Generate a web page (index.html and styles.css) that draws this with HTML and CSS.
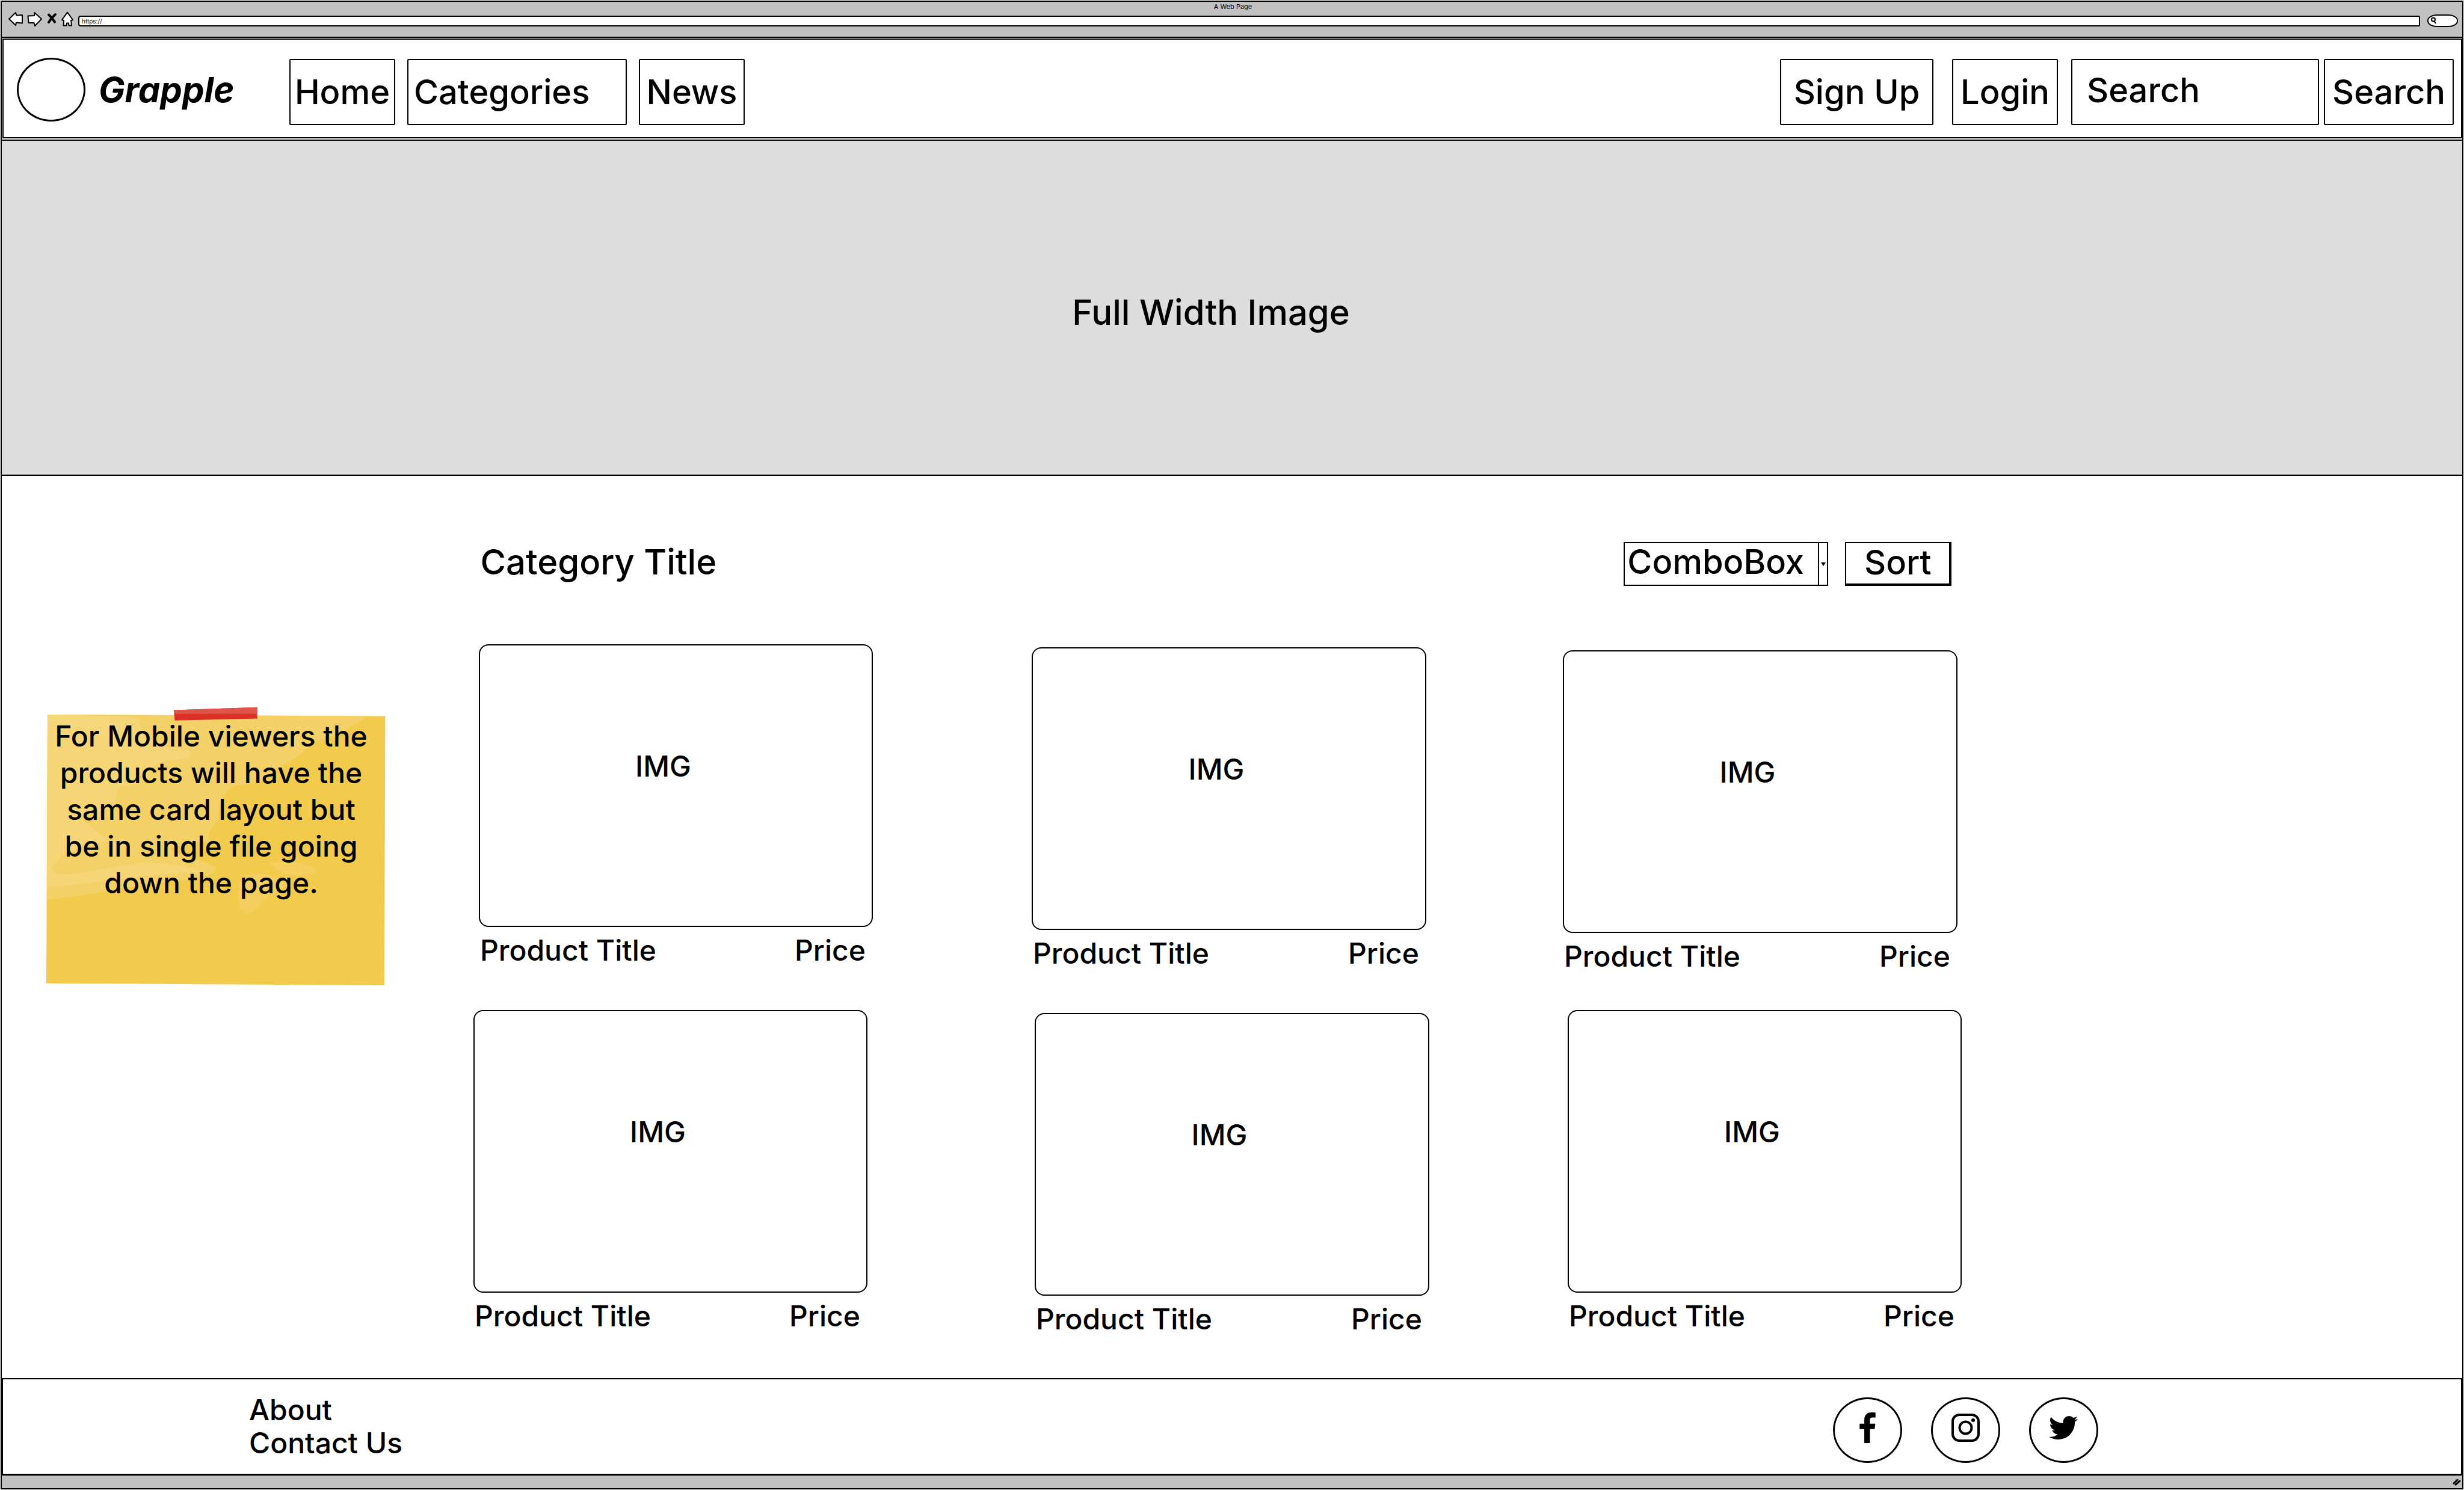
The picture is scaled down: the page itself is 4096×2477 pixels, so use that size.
FILE: index.html
```html
<!DOCTYPE html>
<html lang="en">
<head>
<meta charset="utf-8">
<title>A Web Page</title>
<meta name="viewport" content="width=device-width, initial-scale=1">
<link rel="stylesheet" href="styles.css">
</head>
<body>
<div class="window">
  <div class="chrome">
    <p class="chrome-title">A Web Page</p>
    <div class="chrome-row">
      <div class="chrome-icons">
        <button class="chrome-button" type="button" aria-label="Back">
          <svg width="26" height="26" viewBox="0 0 26 26"><path d="M2 12.500L13 2L14.500 6.500L24 6V19.500L14 18.500L13 23Z" fill="#fff" stroke="#000" stroke-width="2" stroke-linejoin="round"/></svg>
        </button>
        <button class="chrome-button" type="button" aria-label="Forward">
          <svg width="26" height="26" viewBox="0 0 26 26"><path d="M24 12.500L12.500 2L12 7L1.500 7.500L2.500 19L11.500 19L13 24Z" fill="#fff" stroke="#000" stroke-width="2" stroke-linejoin="round"/></svg>
        </button>
        <button class="chrome-button" type="button" aria-label="Stop">
          <svg width="18" height="26" viewBox="0 0 18 26"><path d="M4 5.500Q8 9 14 17.500M15 5Q8 11 4 18" fill="none" stroke="#000" stroke-width="4" stroke-linecap="round"/></svg>
        </button>
        <button class="chrome-button" type="button" aria-label="Home">
          <svg width="22" height="26" viewBox="0 0 22 26"><path d="M11 1.500L20 14L17 15L18 23.500H13.500L13 19.500H10L9.500 23.500H4.500L5 15L2 14Z" fill="#fff" stroke="#000" stroke-width="2" stroke-linejoin="round"/></svg>
        </button>
      </div>
      <input class="address" type="text" value="https://" aria-label="Address">
      <div class="chrome-search">
        <svg width="12" height="13" viewBox="0 0 12 13" aria-hidden="true"><circle cx="5" cy="4.500" r="3" fill="none" stroke="#000" stroke-width="2"/><path d="M6.500 7L9 11" stroke="#000" stroke-width="2"/></svg>
        <input class="chrome-query" type="text" aria-label="Web search">
      </div>
    </div>
  </div>

  <header class="site-header">
    <a class="brand" href="#"><span class="logo"></span><span class="brand-name">Grapple</span></a>
    <nav class="site-nav">
      <a class="box" href="#">Home</a>
      <a class="box box-wide" href="#">Categories</a>
      <a class="box" href="#">News</a>
    </nav>
    <div class="account">
      <button class="box box-signup" type="button">Sign Up</button>
      <button class="box" type="button">Login</button>
    </div>
    <form class="search">
      <input class="box search-field" type="text" value="Search" aria-label="Search">
      <button class="box search-button" type="button">Search</button>
    </form>
  </header>

  <section class="hero"><p>Full Width Image</p></section>

  <main class="catalog">
    <div class="toolbar">
      <h1 class="category">Category Title</h1>
      <div class="combo">
        <select class="combo-select" aria-label="Sort by"><option>ComboBox</option></select>
        <span class="combo-arrow"><svg width="8" height="6" viewBox="0 0 8 6" aria-hidden="true"><path d="M0 0H8L4 6Z"/></svg></span>
      </div>
      <button class="sort" type="button">Sort</button>
    </div>

    <div class="row row-first">
      <article class="card"><div class="picture">IMG</div><div class="caption"><span>Product Title</span><span>Price</span></div></article>
      <article class="card step"><div class="picture">IMG</div><div class="caption"><span>Product Title</span><span>Price</span></div></article>
      <article class="card step-double"><div class="picture">IMG</div><div class="caption"><span>Product Title</span><span>Price</span></div></article>
    </div>
    <div class="row row-second">
      <article class="card"><div class="picture">IMG</div><div class="caption"><span>Product Title</span><span>Price</span></div></article>
      <article class="card step"><div class="picture">IMG</div><div class="caption"><span>Product Title</span><span>Price</span></div></article>
      <article class="card"><div class="picture">IMG</div><div class="caption"><span>Product Title</span><span>Price</span></div></article>
    </div>

    <aside class="note">
      <svg class="note-paper" viewBox="0 0 1568 1568" preserveAspectRatio="none" aria-hidden="true">
        <path d="M70 111L1474 119L1470 1500L65 1490Z" fill="#f2ca4c"/>
        <path d="M70 111L1404 119Q1330 170 1275 222Q1200 232 1165 265C1120 320 1110 330 1000 405C960 450 960 465 850 474C800 510 785 560 780 625C765 700 735 690 742 740L745 765Q640 765 578 800Q600 825 680 850Q770 880 770 905Q760 940 640 960C400 985 260 1040 68 1062Z" fill="#f3d166"/>
        <path d="M70 111L270 118Q440 120 450 135C460 230 500 240 560 275C640 285 665 290 668 315Q665 340 580 345Q500 360 490 410Q470 470 400 475Q355 480 357 520Q360 560 340 590Q270 610 205 640L325 760Q210 790 140 820Q80 890 92 915Q110 935 170 928C300 910 380 880 490 870Q650 880 715 920C500 925 350 965 68 1000Z" fill="#f5d576"/>
        <path d="M315 119Q360 160 405 128Q405 150 375 190Q345 230 280 215Q180 165 70 168V111Z" fill="#f6d980" opacity=".5"/>
        <path d="M996 870Q1080 860 1130 875Q1190 900 1191 914Q1170 935 1090 936Q1010 915 996 870ZM1000 940Q930 915 885 940C855 980 855 1110 890 1130Q920 1135 940 1105C980 1050 1010 1020 1070 985Z" fill="#f4cf60"/>
        <path d="M595 88L942 73V131L599 141Z" fill="#dc2f26"/>
        <path d="M595 88L942 73V107H596Z" fill="#df5449"/>
      </svg>
      <p class="note-text">For Mobile viewers the products will have the same card layout but be in single file going down the page.</p>
    </aside>
  </main>

  <footer class="site-footer">
    <ul class="footer-links">
      <li><a href="#">About</a></li>
      <li><a href="#">Contact Us</a></li>
    </ul>
    <div class="social">
      <a href="#" aria-label="Facebook"><svg width="27" height="51" viewBox="479 0 864 1664"><path d="M1343 12v264h-157q-86 0-116 36t-30 108v189h293l-39 296h-254v759h-306v-759h-255v-296h255v-218q0-186 104-288.500t277-102.500q147 0 228 12z"/></svg></a>
      <a href="#" aria-label="Instagram"><svg width="47" height="47" viewBox="0 0 47 47"><rect x="2" y="2" width="43" height="43" rx="11" fill="none" stroke="#000" stroke-width="4"/><circle cx="23.500" cy="23.500" r="10" fill="none" stroke="#000" stroke-width="4"/><circle cx="36" cy="11" r="3"/></svg></a>
      <a href="#" aria-label="Twitter"><svg width="48" height="39" viewBox="108 256 1576 1280"><path d="M1684 408q-67 98-162 167 1 14 1 42 0 130-38 259.500t-115.500 248.500-184.500 210.500-258 146-323 54.500q-271 0-496-145 35 4 78 4 225 0 401-138-105-2-188-64.500t-114-159.500q33 5 61 5 43 0 85-11-112-23-185.500-111.500t-73.500-205.500v-4q68 38 146 41-66-44-105-115t-39-154q0-88 44-163 121 149 294.500 238.500t371.500 99.500q-8-38-8-74 0-134 94.500-228.500t228.500-94.500q140 0 236 102 109-21 205-78-37 115-142 178 93-10 186-50z"/></svg></a>
    </div>
  </footer>

  <div class="status-bar">
    <svg width="14" height="12" viewBox="0 0 14 12" aria-hidden="true"><path d="M2 8L8 2M5 10L12 4" stroke="#000" stroke-width="3" stroke-linecap="round"/></svg>
  </div>
</div>
</body>
</html>
```

FILE: styles.css
```css
*,
*::before,
*::after {
  box-sizing: border-box;
}

body,
p,
h1,
ul {
  margin: 0;
  padding: 0;
}

body {
  background: #fff;
  color: #000;
  font-family: Inter, "Liberation Sans", sans-serif;
  font-weight: 500;
}

a {
  color: inherit;
  text-decoration: none;
}

button,
input,
select {
  margin: 0;
  color: inherit;
  font: inherit;
}

svg {
  display: block;
}

.window {
  display: flex;
  flex-direction: column;
  min-height: calc(100vh - 2px);
  margin: 1px;
  border: 2px solid #000;
}

/* Browser bar */

.chrome {
  padding: 0 7px 16px 10px;
  border-bottom: 2px solid #000;
  background: #c1c1c1;
  font-weight: 400;
}

.chrome-title {
  font-size: 11px;
  line-height: 16px;
  text-align: center;
}

.chrome-row {
  display: flex;
  align-items: flex-end;
  height: 26px;
}

.chrome-icons {
  display: flex;
  gap: 6px;
  width: 117px;
}

.chrome-button {
  padding: 0;
  border: 0;
  background: none;
}

.address {
  flex: 1;
  height: 18px;
  margin-bottom: 1px;
  padding: 0 4px;
  border: 2px solid #000;
  border-radius: 4px 2px 2px 4px;
  background: #fff;
  font-size: 10px;
}

.chrome-search {
  display: flex;
  align-items: center;
  width: 51px;
  height: 21px;
  margin-left: 12px;
  padding: 0 3px;
  border: 2px solid #000;
  border-radius: 16px / 10px;
  background: #fff;
}

.chrome-query {
  flex: 1;
  min-width: 0;
  height: 14px;
  padding: 0;
  border: 0;
  background: none;
  font-size: 10px;
}

/* Header */

.site-header {
  display: flex;
  align-items: center;
  margin: 1px 0 2px 1px;
  padding: 30px 12px 18px 22px;
  border: 2px solid #000;
}

.brand {
  display: flex;
  align-items: center;
  gap: 22px;
  width: 453px;
  padding-bottom: 8px;
}

.logo {
  width: 114px;
  height: 106px;
  border: 3px solid #000;
  border-radius: 50%;
}

.brand-name {
  font-size: 58px;
  font-style: italic;
  font-weight: 700;
}

.site-nav {
  display: flex;
  gap: 20px;
}

.box {
  min-width: 176px;
  height: 110px;
  padding: 0;
  border: 2px solid #000;
  border-radius: 2px;
  background: #fff;
  font-size: 56px;
  line-height: 106px;
  text-align: center;
}

.box-wide {
  width: 365px;
  padding: 0 9px;
  text-align: left;
}

.account {
  display: flex;
  gap: 31px;
  margin-left: auto;
}

.box-signup {
  width: 255px;
}

.search {
  display: flex;
  gap: 8px;
  margin-left: 22px;
}

.search-field {
  width: 412px;
  padding: 0 24px 6px;
  text-align: left;
}

.search-button {
  width: 216px;
}

/* Banner */

.hero {
  display: flex;
  align-items: center;
  justify-content: center;
  height: 559px;
  padding: 14px 70px 0 0;
  border: solid #000;
  border-width: 2px 0;
  background: #ddd;
  font-size: 58px;
}

/* Catalog */

.catalog {
  position: relative;
  flex: 1;
  padding-top: 110px;
}

.toolbar {
  display: flex;
  align-items: stretch;
  height: 73px;
  margin-bottom: 97px;
  padding: 0 20.750% 0 19.450%;
}

.category {
  margin-right: auto;
  padding-bottom: 6px;
  font-size: 58px;
  font-weight: 500;
  line-height: 67px;
}

.combo {
  position: relative;
  width: 340px;
  margin-right: 28px;
}

.combo-select {
  width: 100%;
  height: 100%;
  padding: 0 0 6px 4px;
  border: 2px solid #000;
  border-radius: 0;
  appearance: none;
  background: #fff;
  font-size: 56px;
  line-height: 63px;
}

.combo-arrow {
  position: absolute;
  top: 0;
  right: 0;
  display: flex;
  align-items: center;
  justify-content: center;
  width: 17px;
  height: 100%;
  border: solid #000;
  border-width: 0 2px;
  pointer-events: none;
}

.sort {
  width: 177px;
  padding: 0 0 4px;
  border: solid #000;
  border-width: 2px 4px 4px 2px;
  background: #fff;
  font-size: 56px;
  line-height: 62px;
}

.row {
  display: grid;
}

.row-first {
  grid-template-columns: 793fr 655fr 264fr 656fr 227fr 656fr 839fr;
  margin-bottom: 59px;
}

.row-second {
  grid-template-columns: 784fr 655fr 278fr 656fr 230fr 655fr 832fr;
}

.card:nth-child(1) {
  grid-column: 2;
}

.card:nth-child(2) {
  grid-column: 4;
}

.card:nth-child(3) {
  grid-column: 6;
}

.step {
  padding-top: 5px;
}

.step-double {
  padding-top: 10px;
}

.picture {
  display: flex;
  align-items: center;
  justify-content: center;
  height: 470px;
  padding: 0 42px 66px 0;
  border: 2px solid #000;
  border-radius: 16px;
  font-size: 48px;
}

.caption {
  display: flex;
  justify-content: space-between;
  padding: 9px 12px 0 2px;
  font-size: 48px;
  line-height: 60px;
}

/* Sticky note laid over the page */

.note {
  position: absolute;
  top: 361px;
  left: 48px;
  width: 627px;
  height: 508px;
}

.note-paper {
  position: absolute;
  inset: 0;
  width: 100%;
  height: 100%;
}

.note-text {
  position: relative;
  width: 540px;
  margin: 41px 0 0 30px;
  font-size: 48px;
  line-height: 61px;
  text-align: center;
}

/* Footer */

.site-footer {
  display: flex;
  align-items: center;
  justify-content: space-between;
  height: 162px;
  padding: 0 14.750% 0 10%;
  border: solid #000;
  border-width: 2px 2px 3px;
}

.footer-links {
  list-style: none;
  padding-bottom: 2px;
  font-size: 48px;
  line-height: 55px;
}

.social {
  display: flex;
  gap: 48px;
  padding-top: 12px;
}

.social a {
  display: flex;
  align-items: center;
  justify-content: center;
  width: 115px;
  height: 109px;
  padding-bottom: 8px;
  border: 3px solid #000;
  border-radius: 50%;
}

.status-bar {
  display: flex;
  align-items: center;
  justify-content: flex-end;
  height: 21px;
  padding-right: 2px;
  background: #c1c1c1;
}
```
